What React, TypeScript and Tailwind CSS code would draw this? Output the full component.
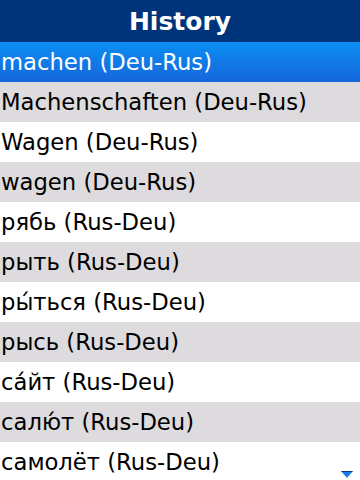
const items: string[] = [
  'machen (Deu-Rus)',
  'Machenschaften (Deu-Rus)',
  'Wagen (Deu-Rus)',
  'wagen (Deu-Rus)',
  'рябь (Rus-Deu)',
  'рыть (Rus-Deu)',
  'ры́ться (Rus-Deu)',
  'рысь (Rus-Deu)',
  'са́йт (Rus-Deu)',
  'салю́т (Rus-Deu)',
  'самолёт (Rus-Deu)',
];

export default function App() {
  return (
    <div className="w-[360px] h-[480px] overflow-hidden bg-white font-['DejaVu_Sans',sans-serif] relative">
      {/* Header */}
      <div className="h-[42px] bg-[#00347a] flex items-center justify-center">
        <h1 className="text-white text-[25px] font-bold leading-none">History</h1>
      </div>

      {/* List */}
      <ul>
        {items.map((item, i) => (
          <li
            key={i}
            className={
              i === 0
                ? 'h-10 flex items-center pl-[1px] text-[22.7px] text-white bg-gradient-to-b from-[#0a8ef2] to-[#1666dc]'
                : i % 2 === 1
                ? 'h-10 flex items-center pl-[1px] text-[22.7px] text-black bg-[#dddbdd]'
                : 'h-10 flex items-center pl-[1px] text-[22.7px] text-black bg-white'
            }
          >
            {item}
          </li>
        ))}
      </ul>

      {/* scroll indicator */}
      <svg className="absolute left-[341px] top-[471px]" width="12" height="7" viewBox="0 0 12 7">
        <polygon points="0,0 12,0 6,7" fill="#1a7ee8" />
        <polygon points="0,0 12,0 11,1 1,1" fill="#0b3a80" />
      </svg>
    </div>
  );
}
